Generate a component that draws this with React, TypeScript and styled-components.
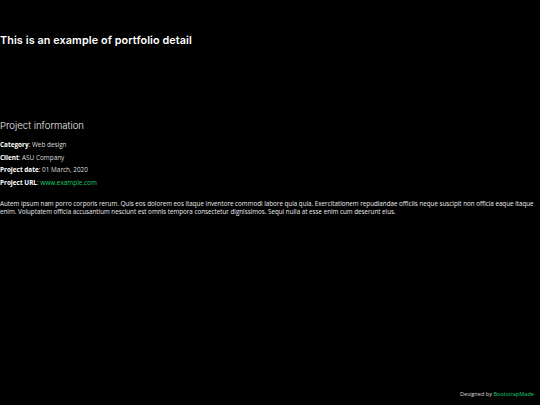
import { createGlobalStyle } from 'styled-components';
import styled from 'styled-components';

const GlobalStyle = createGlobalStyle`
    html, body {
        margin: 0;
        padding: 0;
        background: #000;
        color: #fff;
        font-family: 'Open Sans', sans-serif;
    }
`;

const Page = styled.div`
    width: 540px;
    height: 405px;
    display: flex;
    flex-direction: column;
    background: #000;
`;

const Main = styled.main`
    flex: 1;
`;

const Title = styled.h2`
    margin: 34px 0 0;
    font-family: 'Inter', 'Lato', sans-serif;
    font-size: 10.8px;
    font-weight: 600;
    line-height: 14px;
    letter-spacing: 0.1px;
`;

const InfoBox = styled.div`
    margin-top: 71px;
`;

const InfoTitle = styled.h3`
    margin: 0 0 8px;
    font-family: 'Inter', 'Lato', sans-serif;
    font-size: 9.6px;
    font-weight: 300;
    line-height: 14px;
    color: #eee;
`;

const InfoList = styled.ul`
    list-style: none;
    margin: 0;
    padding: 0;
`;

const InfoItem = styled.li`
    font-size: 6.4px;
    line-height: 8px;
    margin-bottom: 4.6px;
    color: #ddd;
    strong {
        font-weight: 700;
        color: #fff;
    }
`;

const GreenLink = styled.a`
    color: #18d26e;
    text-decoration: none;
`;

const Description = styled.p`
    margin: 13px 0 0;
    font-size: 6.25px;
    line-height: 8px;
    color: #eee;
`;

const Footer = styled.footer`
    display: flex;
    justify-content: flex-end;
    padding: 0 6px 7px 0;
    font-size: 5.6px;
    line-height: 7px;
    color: #ddd;
`;

export default function App() {
    return (
        <>
            <GlobalStyle />
            <Page>
                <Main>
                    <Title>This is an example of portfolio detail</Title>
                    <InfoBox>
                        <InfoTitle>Project information</InfoTitle>
                        <InfoList>
                            <InfoItem><strong>Category</strong>: Web design</InfoItem>
                            <InfoItem><strong>Client</strong>: ASU Company</InfoItem>
                            <InfoItem><strong>Project date</strong>: 01 March, 2020</InfoItem>
                            <InfoItem>
                                <strong>Project URL</strong>: <GreenLink href='#'>www.example.com</GreenLink>
                            </InfoItem>
                        </InfoList>
                    </InfoBox>
                    <Description>
                        Autem ipsum nam porro corporis rerum. Quis eos dolorem eos itaque inventore commodi labore quia quia. Exercitationem repudiandae officiis neque suscipit non officia eaque itaque enim. Voluptatem officia accusantium nesciunt est omnis tempora consectetur dignissimos. Sequi nulla at esse enim cum deserunt eius.
                    </Description>
                </Main>
                <Footer>
                    <span>Designed by <GreenLink href='#'>BootstrapMade</GreenLink></span>
                </Footer>
            </Page>
        </>
    );
}
